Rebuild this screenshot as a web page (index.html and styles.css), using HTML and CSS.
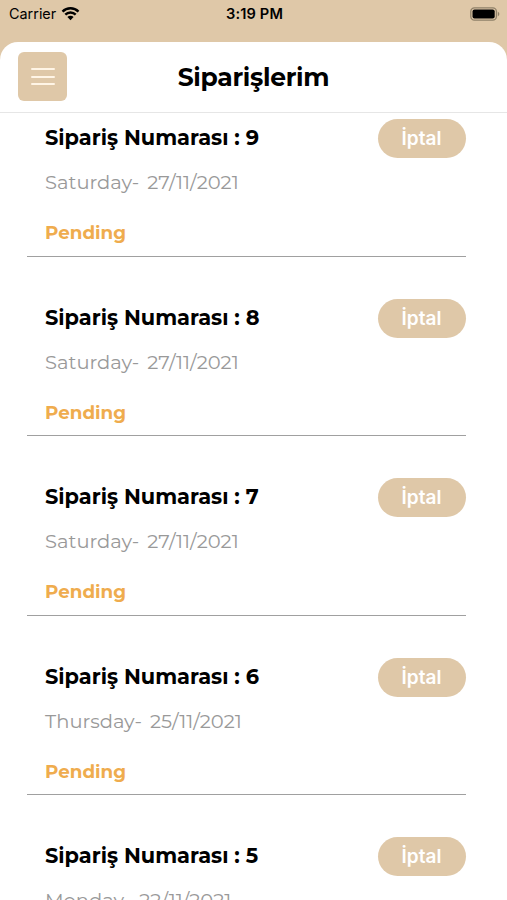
FILE: index.html
```html
<!DOCTYPE html>
<html lang="tr">
<head>
    <meta charset="UTF-8">
    <meta name="viewport" content="width=device-width, initial-scale=1.0">
    <title>Siparişlerim</title>
    <link rel="stylesheet" href="styles.css">
</head>
<body>
    <div class="status-bar">
        <div class="carrier">
            <span>Carrier</span>
            <svg class="wifi" viewBox="0 0 18 14" width="19" height="14">
                <path d="M1 4.6a11.3 11.3 0 0 1 16 0M3.8 7.7a7.3 7.3 0 0 1 10.4 0" fill="none" stroke="#000" stroke-width="2.4"/>
                <path d="M9 13.2L5.9 10.1a4.4 4.4 0 0 1 6.2 0z"/>
            </svg>
        </div>
        <span class="time">3:19 PM</span>
        <svg class="battery" viewBox="0 0 30 14" width="30" height="14">
            <rect x=".8" y=".8" width="25.6" height="12.4" rx="3.6" fill="none" stroke="#8f8068" stroke-width="1.3"/>
            <rect x="2.5" y="2.5" width="22.2" height="9" rx="2"/>
            <path d="M27.8 4.6q3.2 2.4 0 4.8z" fill="#8f8068"/>
        </svg>
    </div>

    <header class="header">
        <button class="menu-button" aria-label="Menü">
            <span></span>
            <span></span>
            <span></span>
        </button>
        <h1>Siparişlerim</h1>
    </header>

    <main class="orders">
        <div class="order">
            <div class="order-info">
                <h2>Sipariş Numarası : 9</h2>
                <p class="date"><span>Saturday-</span><span>27/11/2021</span></p>
                <p class="state">Pending</p>
            </div>
            <button class="cancel">İptal</button>
        </div>
        <div class="order">
            <div class="order-info">
                <h2>Sipariş Numarası : 8</h2>
                <p class="date"><span>Saturday-</span><span>27/11/2021</span></p>
                <p class="state">Pending</p>
            </div>
            <button class="cancel">İptal</button>
        </div>
        <div class="order">
            <div class="order-info">
                <h2>Sipariş Numarası : 7</h2>
                <p class="date"><span>Saturday-</span><span>27/11/2021</span></p>
                <p class="state">Pending</p>
            </div>
            <button class="cancel">İptal</button>
        </div>
        <div class="order">
            <div class="order-info">
                <h2>Sipariş Numarası : 6</h2>
                <p class="date"><span>Thursday-</span><span>25/11/2021</span></p>
                <p class="state">Pending</p>
            </div>
            <button class="cancel">İptal</button>
        </div>
        <div class="order">
            <div class="order-info">
                <h2>Sipariş Numarası : 5</h2>
                <p class="date"><span>Monday-</span><span>22/11/2021</span></p>
                <p class="state">Pending</p>
            </div>
            <button class="cancel">İptal</button>
        </div>
    </main>
</body>
</html>
```
FILE: styles.css
```css
* {
    box-sizing: border-box;
}

body {
    font-family: 'Montserrat', 'Inter', sans-serif;
    display: flex;
    flex-direction: column;
    height: 100vh;
    margin: 0;
    overflow: hidden;
    background-color: #dfc8a8;
    color: #000;
}

h1, h2, p {
    margin: 0;
}

button {
    border: none;
    padding: 0;
    font-family: inherit;
    background-color: #dfc8a8;
    cursor: pointer;
}

.status-bar {
    flex: none;
    display: grid;
    grid-template-columns: 1fr auto 1fr;
    align-items: center;
    height: 42px;
    padding: 0 7px 15px 9px;
    font-family: 'Inter', sans-serif;
    font-size: 14.4px;
}

.carrier {
    display: flex;
    align-items: center;
    gap: 5px;
}

.time {
    font-size: 14.6px;
    font-weight: 600;
    letter-spacing: 0.15px;
}

.battery {
    justify-self: end;
}

.header {
    flex: none;
    display: grid;
    grid-template-columns: 49px 1fr 49px;
    align-items: center;
    height: 71px;
    padding: 0 18px 1px;
    background-color: #fff;
    border-bottom: 1px solid #e6e6e6;
    border-radius: 18px 18px 0 0;
}

.menu-button {
    display: flex;
    flex-direction: column;
    align-items: center;
    justify-content: center;
    gap: 5.5px;
    width: 49px;
    height: 49px;
    border-radius: 6px;
}

.menu-button span {
    width: 24px;
    height: 2px;
    border-radius: 1px;
    background-color: #fff5e6;
}

h1 {
    font-size: 25px;
    font-weight: 700;
    letter-spacing: -0.3px;
    text-align: center;
}

.orders {
    flex: 1;
    overflow: hidden;
    padding: 0 41.5px 0 26.5px;
    background-color: #fff;
}

.order {
    display: flex;
    justify-content: space-between;
    align-items: flex-start;
    height: 179.6px;
    padding: 42px 0 0 18.5px;
    border-bottom: 1px solid #a0a0a0;
}

/* the list is scrolled a little, so the first row starts under the header */
.order:first-child {
    margin-top: -36px;
}

h2 {
    font-size: 20.9px;
    font-weight: 700;
    line-height: 38px;
}

.date {
    display: flex;
    gap: 8px;
    margin-top: 10px;
    font-size: 19.5px;
    font-weight: 400;
    line-height: 30px;
    color: #999;
}

.state {
    margin-top: 21px;
    font-size: 18.3px;
    font-weight: 700;
    line-height: 30px;
    color: #efac4e;
}

.cancel {
    width: 88px;
    height: 39px;
    border-radius: 20px;
    font-family: 'Inter', sans-serif;
    font-size: 19px;
    font-weight: 600;
    color: #fff;
}
```
